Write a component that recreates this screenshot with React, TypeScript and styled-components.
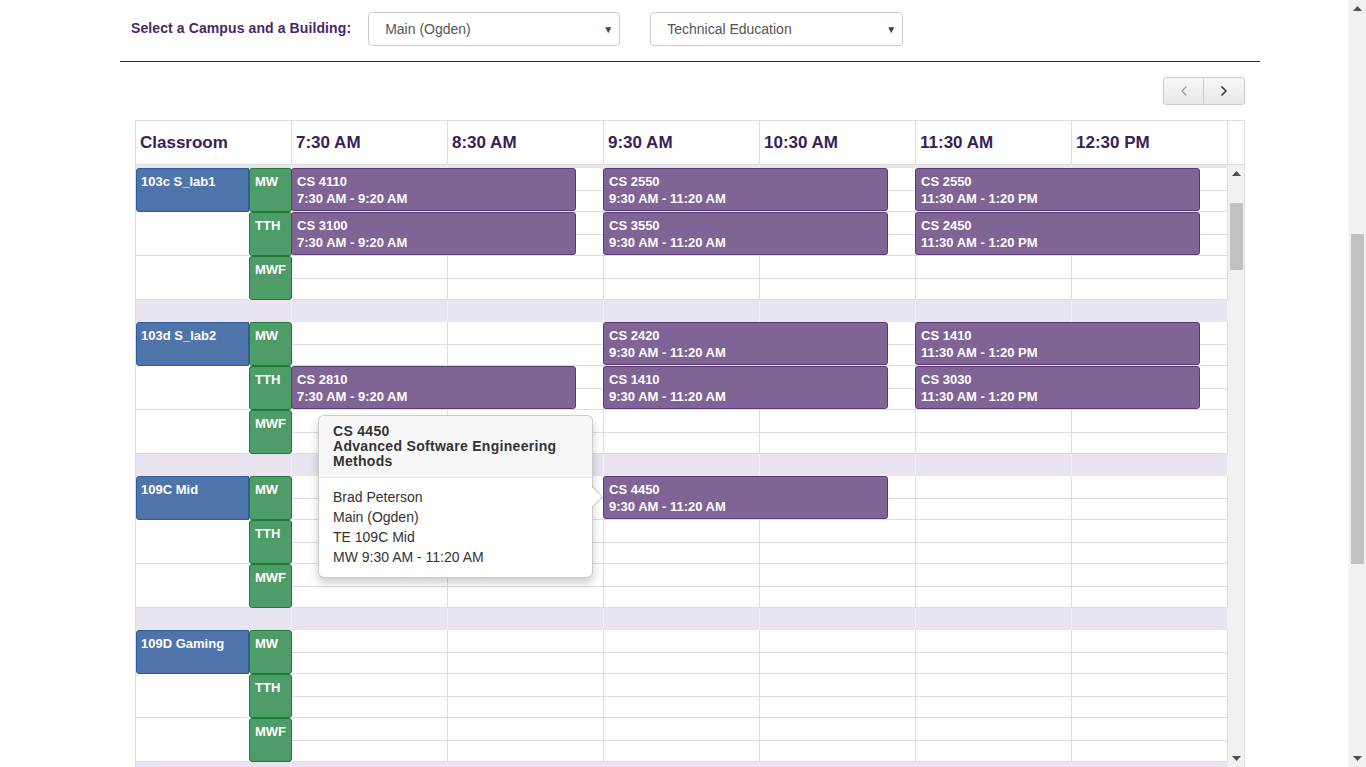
import React from "react";
import styled, { createGlobalStyle } from "styled-components";
import { ChevronLeft, ChevronRight } from "lucide-react";

const HOUR = 156;
const START = 7.5;

type Ev = { code: string; start: number; end: number; time: string };
type DayRow = { day: string; events: Ev[] };
type Room = { name: string; rows: DayRow[] };

const A: [number, number, string] = [7.5, 9 + 20 / 60, "7:30 AM - 9:20 AM"];
const B: [number, number, string] = [9.5, 11 + 20 / 60, "9:30 AM - 11:20 AM"];
const C: [number, number, string] = [11.5, 13 + 20 / 60, "11:30 AM - 1:20 PM"];
const ev = (code: string, t: [number, number, string]): Ev => ({ code, start: t[0], end: t[1], time: t[2] });

const rooms: Room[] = [
  {
    name: "103c S_lab1",
    rows: [
      { day: "MW", events: [ev("CS 4110", A), ev("CS 2550", B), ev("CS 2550", C)] },
      { day: "TTH", events: [ev("CS 3100", A), ev("CS 3550", B), ev("CS 2450", C)] },
      { day: "MWF", events: [] },
    ],
  },
  {
    name: "103d S_lab2",
    rows: [
      { day: "MW", events: [ev("CS 2420", B), ev("CS 1410", C)] },
      { day: "TTH", events: [ev("CS 2810", A), ev("CS 1410", B), ev("CS 3030", C)] },
      { day: "MWF", events: [] },
    ],
  },
  {
    name: "109C Mid",
    rows: [
      { day: "MW", events: [ev("CS 4450", B)] },
      { day: "TTH", events: [] },
      { day: "MWF", events: [] },
    ],
  },
  {
    name: "109D Gaming",
    rows: [
      { day: "MW", events: [] },
      { day: "TTH", events: [] },
      { day: "MWF", events: [] },
    ],
  },
];

const hours = ["7:30 AM", "8:30 AM", "9:30 AM", "10:30 AM", "11:30 AM", "12:30 PM"];

const GlobalStyle = createGlobalStyle`
  html, body { margin: 0; padding: 0; overflow: hidden; background: #fff; }
  body { font-family: "Liberation Sans", Arial, Helvetica, sans-serif; }
  * { box-sizing: border-box; }
`;

const Page = styled.div`
  display: flex;
  height: 100vh;
`;

const Main = styled.main`
  flex: 1;
  min-width: 0;
  overflow: hidden;
`;

const Container = styled.div`
  width: 1140px;
  margin-left: 120px;
`;

const TopBar = styled.div`
  display: flex;
  align-items: center;
  padding: 12px 0 15px 11px;
  border-bottom: 1px solid #3d2457;
`;

const FieldLabel = styled.label`
  font-size: 14px;
  font-weight: bold;
  color: #4a2768;
  margin-right: 17px;
  padding-bottom: 3px;
  letter-spacing: 0.1px;
`;

const SelectBox = styled.div<{ $w: number }>`
  width: ${(p) => p.$w}px;
  height: 34px;
  border: 1px solid #ccc;
  border-radius: 4px;
  display: flex;
  align-items: center;
  justify-content: space-between;
  padding: 0 6px 0 16px;
  font-size: 14px;
  color: #555;
  & + & {
    margin-left: 30px;
  }
`;

const Caret = styled.span`
  font-size: 10px;
  color: #444;
`;

const Content = styled.div`
  padding: 15px 15px 0;
`;

const NavRow = styled.div`
  display: flex;
  justify-content: flex-end;
  margin-bottom: 15px;
`;

const BtnGroup = styled.div`
  display: flex;
`;

const NavButton = styled.button<{ $dim?: boolean }>`
  width: 41px;
  height: 28px;
  padding: 0;
  border: 1px solid #ccc;
  background: linear-gradient(#f7f7f7, #e8e8e8);
  display: flex;
  align-items: center;
  justify-content: center;
  color: ${(p) => (p.$dim ? "#9a9a9a" : "#333")};
  &:first-child {
    border-radius: 3px 0 0 3px;
  }
  &:last-child {
    border-radius: 0 3px 3px 0;
    margin-left: -1px;
    width: 42px;
  }
`;

const Calendar = styled.div`
  border: 1px solid #ddd;
  width: 1110px;
`;

const HeaderRow = styled.div`
  display: grid;
  grid-template-columns: repeat(7, 156px) 16px;
  height: 44px;
  border-bottom: 1px solid #ddd;
`;

const HeaderCell = styled.div`
  border-right: 1px solid #ddd;
  padding-left: 4px;
  display: flex;
  align-items: center;
  font-size: 17px;
  font-weight: bold;
  color: #3b1d57;
`;

const BodyWrap = styled.div`
  display: flex;
  height: 602px;
`;

const Viewport = styled.div`
  position: relative;
  width: 1092px;
  overflow: hidden;
`;

const Band = styled.div<{ $h: number }>`
  height: ${(p) => p.$h}px;
  background-color: #e9e4ef;
  background-image: linear-gradient(to right, transparent 155px, #f3f0f6 155px, #f3f0f6 156px, transparent 156px);
  background-size: 156px 100%;
`;

const Row = styled.div`
  display: grid;
  grid-template-columns: 113px 43px 936px;
  height: 44px;
`;

const RoomCell = styled.div`
  border-bottom: 1px solid #ddd;
`;

const RoomLabel = styled.div`
  background: #4f74aa;
  border: 1px solid #2c5b9b;
  border-radius: 3px 0 0 3px;
  color: #fff;
  font-size: 13px;
  font-weight: bold;
  line-height: 17px;
  padding: 4px 4px;
  white-space: nowrap;
`;

const DayLabel = styled.div`
  background: #4e9c68;
  border: 1px solid #1e7a36;
  border-radius: 3px;
  color: #fff;
  font-size: 13px;
  font-weight: bold;
  line-height: 17px;
  padding: 4px 5px;
`;

const Timeline = styled.div`
  position: relative;
  border-bottom: 1px solid #ddd;
  background-image: linear-gradient(to right, transparent 155px, #ddd 155px),
    linear-gradient(to bottom, transparent 22px, #ddd 22px, #ddd 23px, transparent 23px);
  background-size: 156px 100%, 100% 100%;
  background-repeat: repeat-x, no-repeat;
`;

const EventBox = styled.div`
  position: absolute;
  top: 0;
  height: 43px;
  background: #806495;
  border: 1px solid #5a3b73;
  border-radius: 3px;
  color: #fff;
  font-size: 13px;
  font-weight: bold;
  line-height: 17px;
  padding: 4px 5px;
  white-space: nowrap;
  overflow: hidden;
  z-index: 1;
`;

const Tooltip = styled.div`
  position: absolute;
  left: 182px;
  top: 250px;
  width: 275px;
  background: #fff;
  border: 1px solid rgba(0, 0, 0, 0.2);
  border-radius: 6px;
  box-shadow: 0 5px 10px rgba(0, 0, 0, 0.2);
  z-index: 5;
  &::before,
  &::after {
    content: "";
    position: absolute;
    width: 0;
    height: 0;
    border-style: solid;
  }
  &::before {
    right: -11px;
    top: 70px;
    border-width: 11px 0 11px 11px;
    border-color: transparent transparent transparent rgba(0, 0, 0, 0.25);
  }
  &::after {
    right: -10px;
    top: 71px;
    border-width: 10px 0 10px 10px;
    border-color: transparent transparent transparent #fff;
  }
`;

const TipTitle = styled.div`
  padding: 8px 14px;
  background: #f7f7f7;
  border-bottom: 1px solid #ebebeb;
  border-radius: 5px 5px 0 0;
  font-size: 14px;
  font-weight: bold;
  line-height: 15px;
  color: #333;
  letter-spacing: 0.3px;
`;

const TipBody = styled.div`
  padding: 9px 14px 10px;
  font-size: 14px;
  line-height: 20px;
  color: #333;
`;

const ScrollTrack = styled.div<{ $w: number }>`
  width: ${(p) => p.$w}px;
  flex: none;
  background: #f1f1f1;
  display: flex;
  flex-direction: column;
  align-items: center;
`;

const ArrowBtn = styled.div`
  height: 17px;
  width: 100%;
  display: flex;
  align-items: center;
  justify-content: center;
  flex: none;
`;

const ThumbArea = styled.div`
  flex: 1;
  width: 100%;
  display: flex;
  flex-direction: column;
  align-items: center;
`;

const Thumb = styled.div<{ $top: number; $h: number }>`
  margin-top: ${(p) => p.$top}px;
  height: ${(p) => p.$h}px;
  width: 13px;
  background: #c1c1c1;
`;

const Arrow = ({ up }: { up?: boolean }) => (
  <svg width="9" height="5" viewBox="0 0 9 5">
    <polygon points={up ? "0,5 4.5,0 9,5" : "0,0 9,0 4.5,5"} fill="#505050" />
  </svg>
);

const Scrollbar = ({ w, top, h }: { w: number; top: number; h: number }) => (
  <ScrollTrack $w={w}>
    <ArrowBtn>
      <Arrow up />
    </ArrowBtn>
    <ThumbArea>
      <Thumb $top={top} $h={h} />
    </ThumbArea>
    <ArrowBtn>
      <Arrow />
    </ArrowBtn>
  </ScrollTrack>
);

export default function App() {
  return (
    <Page>
      <GlobalStyle />
      <Main>
        <Container>
          <TopBar>
            <FieldLabel>Select a Campus and a Building:</FieldLabel>
            <SelectBox $w={252}>
              <span>Main (Ogden)</span>
              <Caret>▼</Caret>
            </SelectBox>
            <SelectBox $w={253}>
              <span>Technical Education</span>
              <Caret>▼</Caret>
            </SelectBox>
          </TopBar>
          <Content>
            <NavRow>
              <BtnGroup>
                <NavButton $dim aria-label="previous">
                  <ChevronLeft size={16} strokeWidth={2} />
                </NavButton>
                <NavButton aria-label="next">
                  <ChevronRight size={16} strokeWidth={2.5} />
                </NavButton>
              </BtnGroup>
            </NavRow>
            <Calendar>
              <HeaderRow>
                <HeaderCell>Classroom</HeaderCell>
                {hours.map((h) => (
                  <HeaderCell key={h}>{h}</HeaderCell>
                ))}
                <div />
              </HeaderRow>
              <BodyWrap>
                <Viewport>
                  {rooms.map((room, gi) => (
                    <React.Fragment key={room.name}>
                      <Band $h={gi === 0 ? 3 : 22} />
                      {room.rows.map((r, ri) => (
                        <Row key={r.day}>
                          {ri === 0 ? <RoomLabel>{room.name}</RoomLabel> : <RoomCell />}
                          <DayLabel>{r.day}</DayLabel>
                          <Timeline>
                            {r.events.map((e, ei) => (
                              <EventBox
                                key={ei}
                                style={{
                                  left: (e.start - START) * HOUR - 1,
                                  width: (e.end - e.start) * HOUR - 1,
                                }}
                              >
                                <div>{e.code}</div>
                                <div>{e.time}</div>
                              </EventBox>
                            ))}
                          </Timeline>
                        </Row>
                      ))}
                    </React.Fragment>
                  ))}
                  <Band $h={22} />
                  <Tooltip>
                    <TipTitle>
                      <div>CS 4450</div>
                      <div>Advanced Software Engineering Methods</div>
                    </TipTitle>
                    <TipBody>
                      <div>Brad Peterson</div>
                      <div>Main (Ogden)</div>
                      <div>TE 109C Mid</div>
                      <div>MW 9:30 AM - 11:20 AM</div>
                    </TipBody>
                  </Tooltip>
                </Viewport>
                <Scrollbar w={16} top={21} h={67} />
              </BodyWrap>
            </Calendar>
          </Content>
        </Container>
      </Main>
      <Scrollbar w={17} top={217} h={330} />
    </Page>
  );
}
